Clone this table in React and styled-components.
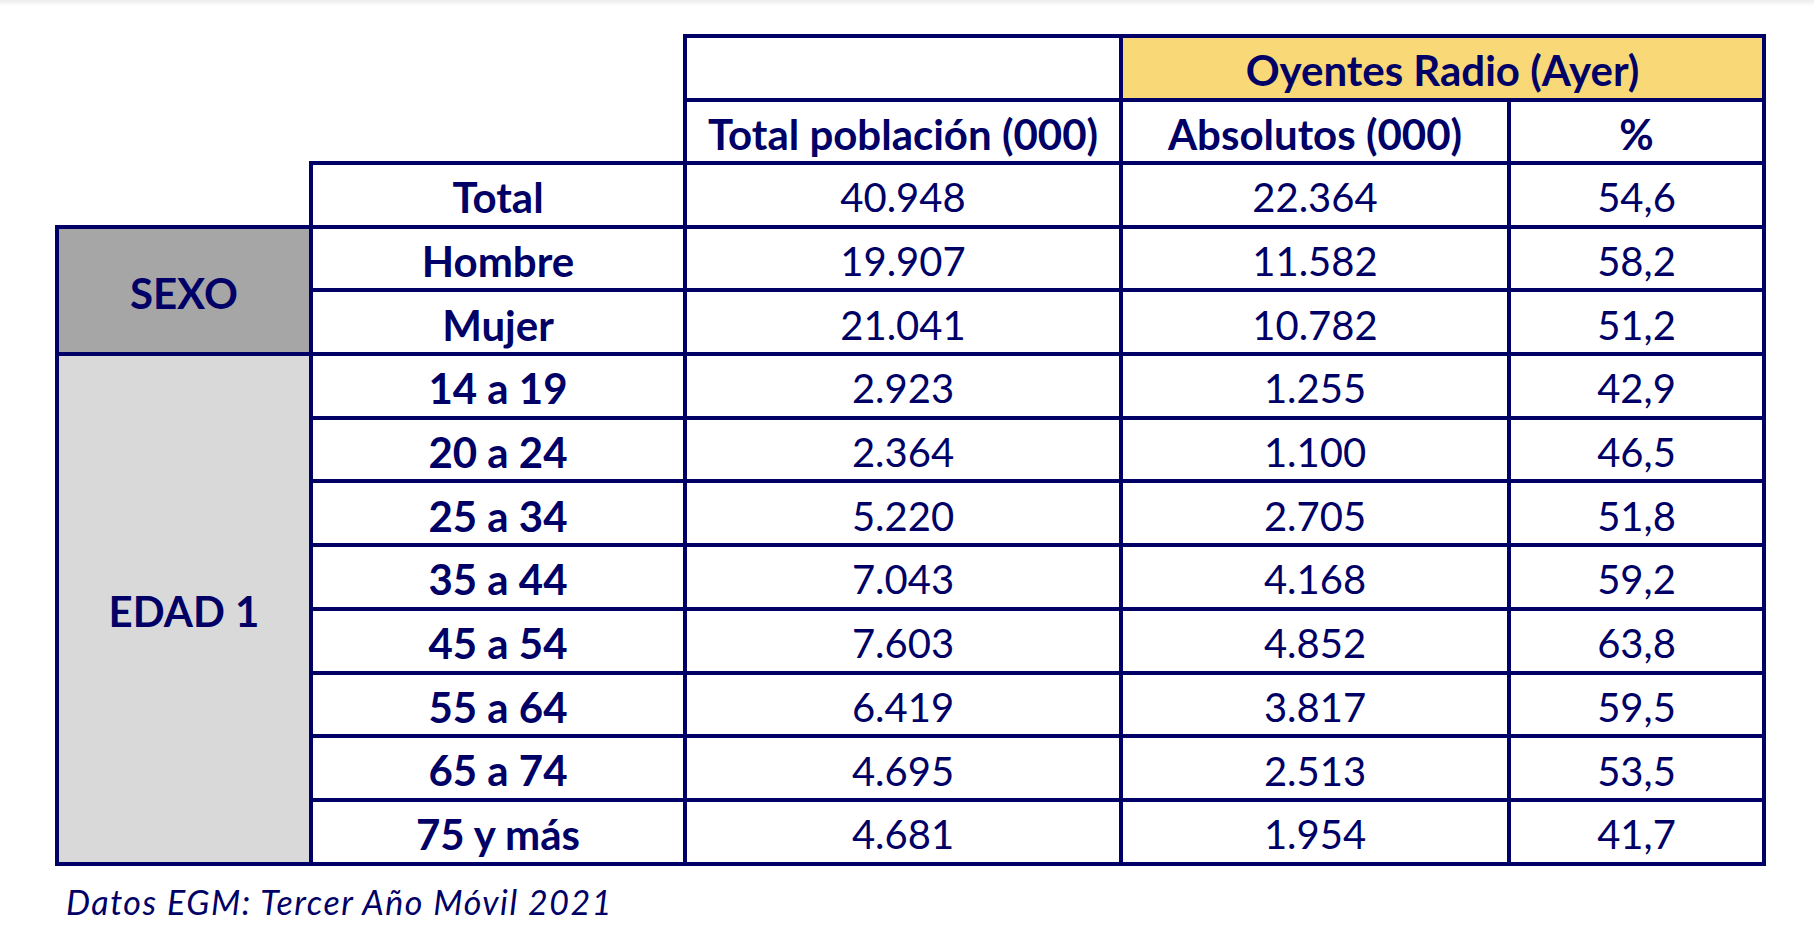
import React from "react";
import styled, { createGlobalStyle } from "styled-components";

const NAVY = "#000066";

const GlobalStyle = createGlobalStyle`
  html, body {
    margin: 0;
    padding: 0;
    background: #ffffff;
  }
  body {
    font-family: Lato, "Open Sans", "Liberation Sans", sans-serif;
    color: ${NAVY};
  }
`;

const Page = styled.div`
  width: 1814px;
  height: 944px;
  background: #ffffff;
  position: relative;
  overflow: hidden;
`;

const TopShade = styled.div`
  height: 6px;
  background: linear-gradient(#ececec, #ffffff);
`;

const Content = styled.div`
  padding: 28px 0 0 55px;
`;

const Table = styled.table`
  border-collapse: collapse;
  table-layout: fixed;
  width: 1711px;
`;

const Cell = styled.td`
  height: ${(p) => p.$h || 63.7}px;
  padding: 5px 0 0;
  text-align: center;
  vertical-align: middle;
  white-space: nowrap;
  font-size: ${(p) => (p.$bold ? 42 : 40)}px;
  font-weight: ${(p) => (p.$bold ? 700 : 400)};
  color: ${NAVY};
  line-height: 1.2;
  background: ${(p) => p.$fill || "transparent"};
  border: ${(p) => (p.$empty ? "none" : `4px solid ${NAVY}`)};
  box-sizing: border-box;
`;

const Footer = styled.div`
  margin: 16px 0 0 11px;
  font-style: italic;
  font-size: 34px;
  letter-spacing: 1.5px;
  color: ${NAVY};
  line-height: 1.2;
`;

const widths = [254, 374, 436, 388, 255];

const groups = [
  { label: "SEXO", fill: "#a6a6a6", rows: [
    ["Hombre", "19.907", "11.582", "58,2"],
    ["Mujer", "21.041", "10.782", "51,2"],
  ] },
  { label: "EDAD 1", fill: "#d9d9d9", rows: [
    ["14 a 19", "2.923", "1.255", "42,9"],
    ["20 a 24", "2.364", "1.100", "46,5"],
    ["25 a 34", "5.220", "2.705", "51,8"],
    ["35 a 44", "7.043", "4.168", "59,2"],
    ["45 a 54", "7.603", "4.852", "63,8"],
    ["55 a 64", "6.419", "3.817", "59,5"],
    ["65 a 74", "4.695", "2.513", "53,5"],
    ["75 y más", "4.681", "1.954", "41,7"],
  ] },
];

export default function App() {
  return (
    <Page>
      <GlobalStyle />
      <TopShade />
      <Content>
        <Table>
          <colgroup>
            {widths.map((w, i) => (
              <col key={i} style={{ width: w }} />
            ))}
          </colgroup>
          <tbody>
            <tr>
              <Cell $empty colSpan={2} rowSpan={2} $h={64} />
              <Cell $h={64} />
              <Cell $h={64} $bold colSpan={2} $fill="#f8d877">Oyentes Radio (Ayer)</Cell>
            </tr>
            <tr>
              <Cell $h={63} $bold>Total población (000)</Cell>
              <Cell $h={63} $bold>Absolutos (000)</Cell>
              <Cell $h={63} $bold>%</Cell>
            </tr>
            <tr>
              <Cell $empty />
              <Cell $bold>Total</Cell>
              <Cell>40.948</Cell>
              <Cell>22.364</Cell>
              <Cell>54,6</Cell>
            </tr>
            {groups.map((g) =>
              g.rows.map((r, i) => (
                <tr key={g.label + r[0]}>
                  {i === 0 && (
                    <Cell $bold $fill={g.fill} rowSpan={g.rows.length}>
                      {g.label}
                    </Cell>
                  )}
                  <Cell $bold>{r[0]}</Cell>
                  <Cell>{r[1]}</Cell>
                  <Cell>{r[2]}</Cell>
                  <Cell>{r[3]}</Cell>
                </tr>
              ))
            )}
          </tbody>
        </Table>
        <Footer>Datos EGM: Tercer Año Móvil 2021</Footer>
      </Content>
    </Page>
  );
}
